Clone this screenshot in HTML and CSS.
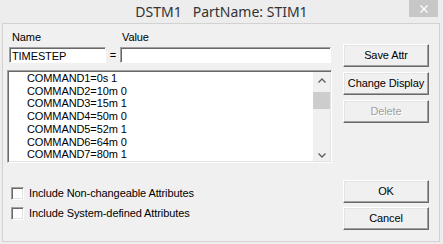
FILE: index.html
```html
<!DOCTYPE html>
<html lang="en">

<head>
    <meta charset="UTF-8">
    <title>DSTM1 PartName: STIM1</title>
    <link rel="stylesheet" href="styles.css">
</head>

<body>
    <div class="titlebar">
        <span class="title">DSTM1   PartName: STIM1</span>
        <div class="close">
            <svg width="8" height="8" viewBox="0 0 8 8">
                <path d="M0.5 0.5L7.5 7.5M7.5 0.5L0.5 7.5" stroke="#fff" stroke-width="1.3" fill="none" />
            </svg>
        </div>
    </div>
    <div class="client">
        <div class="main">
            <div class="labels">
                <span class="lbl_name">Name</span>
                <span></span>
                <span class="lbl_value">Value</span>
            </div>
            <div class="fields">
                <input class="field" type="text" value="TIMESTEP">
                <span class="eq">=</span>
                <input class="field" type="text" value="">
            </div>
            <div class="list">
                <ul class="items">
                    <li>COMMAND1=0s 1</li>
                    <li>COMMAND2=10m 0</li>
                    <li>COMMAND3=15m 1</li>
                    <li>COMMAND4=50m 0</li>
                    <li>COMMAND5=52m 1</li>
                    <li>COMMAND6=64m 0</li>
                    <li>COMMAND7=80m 1</li>
                </ul>
                <div class="scroll">
                    <div class="arrow up">
                        <svg width="8" height="5" viewBox="0 0 8 5">
                            <path d="M0.5 4.5L4 1L7.5 4.5" stroke="#606060" stroke-width="1.4" fill="none" />
                        </svg>
                    </div>
                    <div class="thumb"></div>
                    <div class="track"></div>
                    <div class="arrow down">
                        <svg width="8" height="5" viewBox="0 0 8 5">
                            <path d="M0.5 0.5L4 4L7.5 0.5" stroke="#606060" stroke-width="1.4" fill="none" />
                        </svg>
                    </div>
                </div>
            </div>
            <div class="checks">
                <label class="check"><span class="box"></span>Include Non-changeable Attributes</label>
                <label class="check"><span class="box"></span>Include System-defined Attributes</label>
            </div>
        </div>
        <div class="side">
            <div class="btn_group">
                <div class="btn">Save Attr</div>
                <div class="btn">Change Display</div>
                <div class="btn disabled">Delete</div>
            </div>
            <div class="btn_group bottom">
                <div class="btn">OK</div>
                <div class="btn">Cancel</div>
            </div>
        </div>
    </div>
</body>

</html>
```

FILE: styles.css
```css
* {
    margin: 0;
    padding: 0;
    box-sizing: border-box;
}

li {
    list-style: none;
}

body {
    width: 443px;
    height: 244px;
    overflow: hidden;
    background-color: #ededed;
    font: 11px/13px "Liberation Sans", Arial, sans-serif;
    letter-spacing: -0.1px;
    color: #000;
}

.titlebar {
    height: 23px;
    position: relative;
    text-align: center;
}

.title {
    font: 14px/23px "Noto Sans", "Open Sans", sans-serif;
    letter-spacing: 0;
    color: #333;
    white-space: pre;
}

.close {
    position: absolute;
    top: 0;
    right: 5px;
    width: 29px;
    height: 17px;
    background-color: #c7c7c7;
    display: flex;
    align-items: center;
    justify-content: center;
}

.client {
    display: flex;
    height: 219px;
    margin: 0 3px 2px 2px;
    border: 1px solid #d2d2d2;
    background-color: #f0f0f0;
}

.main {
    width: 325px;
    margin-left: 4px;
}

.labels,
.fields {
    display: grid;
    grid-template-columns: 97px 14px 211px;
    padding-left: 2px;
}

.labels {
    height: 20px;
    padding-top: 7px;
}

.lbl_name {
    padding-left: 3px;
}

.lbl_value {
    padding-left: 2px;
}

.fields {
    height: 16px;
    margin-top: 3px;
}

.field {
    height: 16px;
    border: 1px solid;
    border-color: #a0a0a0 #fff #fff #a0a0a0;
    box-shadow: inset 1px 1px 0 #696969;
    background-color: #fff;
    font: inherit;
    letter-spacing: inherit;
    padding: 1px 0 0 2px;
    outline: none;
}

.eq {
    text-align: center;
    line-height: 17px;
}

.list {
    display: flex;
    height: 93px;
    margin-top: 7px;
    padding: 1px;
    border: 1px solid;
    border-color: #a0a0a0 #fff #fff #a0a0a0;
    box-shadow: inset 1px 1px 0 #696969, inset -1px -1px 0 #e3e3e3;
    background-color: #fff;
}

.items {
    flex: 1;
    overflow: hidden;
    padding-left: 17px;
    margin-left: 1px;
    line-height: 12.7px;
}

.scroll {
    width: 17px;
    display: flex;
    flex-direction: column;
    background-color: #f0f0f0;
}

.arrow {
    height: 17px;
    display: flex;
    justify-content: center;
}

.arrow.up {
    align-items: center;
    padding-bottom: 1px;
}

.arrow.down {
    align-items: flex-end;
    padding-bottom: 3px;
}

.thumb {
    height: 17px;
    margin-top: 3px;
    background-color: #cdcdcd;
}

.track {
    flex: 1;
}

.checks {
    margin-top: 24px;
    display: flex;
    flex-direction: column;
    gap: 7px;
}

.check {
    display: flex;
    align-items: center;
    gap: 5px;
    height: 13px;
    margin-left: 4px;
}

.box {
    width: 13px;
    height: 13px;
    border: 1px solid;
    border-color: #a0a0a0 #fff #fff #a0a0a0;
    box-shadow: inset 1px 1px 0 #696969, inset -1px -1px 0 #e3e3e3;
    background-color: #fff;
}

.side {
    width: 86px;
    margin-left: 11px;
    padding-top: 20px;
}

.btn_group {
    display: flex;
    flex-direction: column;
    gap: 5px;
}

.btn_group.bottom {
    margin-top: 57px;
    gap: 4px;
}

.btn {
    height: 23px;
    line-height: 20px;
    text-align: center;
    background-color: #f0f0f0;
    border: 1px solid;
    border-color: #fff #696969 #696969 #fff;
    box-shadow: inset -1px -1px 0 #a0a0a0, inset 1px 1px 0 #e3e3e3;
}

.btn.disabled {
    color: #a0a0a0;
    text-shadow: 1px 1px 0 #fff;
}
```
